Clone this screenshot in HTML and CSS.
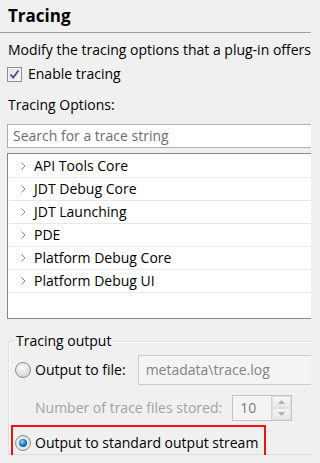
FILE: index.html
```html
<!DOCTYPE html>
<html>
<head>
<meta charset="utf-8">
<link rel="stylesheet" href="styles.css">
</head>
<body>
<div class="page">
  <div class="header"><span class="title">Tracing</span></div>
  <div class="content">
    <div class="desc">Modify the tracing options that a plug-in offers.</div>
    <label class="check-row">
      <span class="checkbox">
        <svg width="11" height="11" viewBox="0 0 11 11"><path d="M1.5 5.5 L4.2 8.6 L9.5 1.5" fill="none" stroke="#3b5197" stroke-width="1.8"/></svg>
      </span>
      <span>Enable tracing</span>
    </label>
    <div class="section-label">Tracing Options:</div>
    <div class="search">Search for a trace string</div>
    <div class="tree">
      <div class="row"><span class="chev"><svg width="5" height="8" viewBox="0 0 5 8"><path d="M0.5 0.5 L4 4 L0.5 7.5" fill="none" stroke="#8a8a8a" stroke-width="1"/></svg></span>API Tools Core</div>
      <div class="row"><span class="chev"><svg width="5" height="8" viewBox="0 0 5 8"><path d="M0.5 0.5 L4 4 L0.5 7.5" fill="none" stroke="#8a8a8a" stroke-width="1"/></svg></span>JDT Debug Core</div>
      <div class="row"><span class="chev"><svg width="5" height="8" viewBox="0 0 5 8"><path d="M0.5 0.5 L4 4 L0.5 7.5" fill="none" stroke="#8a8a8a" stroke-width="1"/></svg></span>JDT Launching</div>
      <div class="row"><span class="chev"><svg width="5" height="8" viewBox="0 0 5 8"><path d="M0.5 0.5 L4 4 L0.5 7.5" fill="none" stroke="#8a8a8a" stroke-width="1"/></svg></span>PDE</div>
      <div class="row"><span class="chev"><svg width="5" height="8" viewBox="0 0 5 8"><path d="M0.5 0.5 L4 4 L0.5 7.5" fill="none" stroke="#8a8a8a" stroke-width="1"/></svg></span>Platform Debug Core</div>
      <div class="row"><span class="chev"><svg width="5" height="8" viewBox="0 0 5 8"><path d="M0.5 0.5 L4 4 L0.5 7.5" fill="none" stroke="#8a8a8a" stroke-width="1"/></svg></span>Platform Debug UI</div>
    </div>
    <fieldset class="group">
      <legend>Tracing output</legend>
      <div class="opt-row file-row">
        <span class="radio"></span>
        <span class="opt-label">Output to file:</span>
        <div class="field">metadata\trace.log</div>
      </div>
      <div class="opt-row count-row">
        <span class="disabled-text">Number of trace files stored:</span>
        <div class="spinner">
          <span class="spin-value">10</span>
          <span class="spin-buttons">
            <span class="spin-btn"><svg width="7" height="4" viewBox="0 0 7 4"><path d="M0 4 L3.5 0 L7 4 Z" fill="#b0b0b0"/></svg></span>
            <span class="spin-btn"><svg width="7" height="4" viewBox="0 0 7 4"><path d="M0 0 L3.5 4 L7 0 Z" fill="#b0b0b0"/></svg></span>
          </span>
        </div>
      </div>
      <div class="opt-row highlight">
        <span class="radio selected"><span class="dot"></span></span>
        <span class="opt-label">Output to standard output stream</span>
      </div>
    </fieldset>
  </div>
</div>
</body>
</html>
```

FILE: styles.css
```css
html, body {
  margin: 0;
  padding: 0;
  background: #f0f0f0;
  overflow: hidden;
}

body {
  font-family: "Open Sans", "Noto Sans", sans-serif;
  font-size: 14px;
  line-height: 20px;
  color: #000;
}

.page {
  width: 311px;
  overflow: hidden;
}

.header {
  height: 32px;
  border-bottom: 1px solid #a0a0a0;
  padding-left: 8px;
  display: flex;
  align-items: center;
}

.title {
  font-weight: 700;
  font-size: 17px;
  line-height: 22px;
  margin-top: -1px;
}

.content {
  padding-left: 7px;
}

.desc {
  margin-top: 7px;
  padding-left: 1px;
  white-space: nowrap;
  overflow: hidden;
}

.check-row {
  display: flex;
  align-items: center;
  margin-top: 4px;
  height: 20px;
}

.checkbox {
  width: 13px;
  height: 13px;
  border: 1px solid #8e8f8f;
  background: linear-gradient(135deg, #dcdcdc, #fbfbfb);
  box-shadow: inset 0 0 0 1px #f4f4f4;
  display: flex;
  align-items: center;
  justify-content: center;
  margin-right: 6px;
}

.section-label {
  margin-top: 11px;
  padding-left: 1px;
}

.search {
  margin-top: 9px;
  height: 22px;
  border: 1px solid #abadb3;
  border-right: none;
  background: #fff;
  color: #6d6d6d;
  padding-left: 5px;
  line-height: 22px;
  white-space: nowrap;
  overflow: hidden;
}

.tree {
  margin-top: 5px;
  height: 163px;
  border: 1px solid #828790;
  border-right: none;
  background: #fff;
  padding: 1px 0 0 1px;
}

.row {
  height: 22px;
  line-height: 22px;
  border-bottom: 1px solid #e8e8e8;
  display: flex;
  align-items: center;
  white-space: nowrap;
}

.chev {
  width: 25px;
  padding-left: 12px;
  box-sizing: border-box;
  display: flex;
  align-items: center;
}

.group {
  margin: 12px 0 0 1px;
  padding: 0 0 3px 2px;
  border: 1px solid #d5dfe5;
  border-right: none;
  border-radius: 3px 0 0 3px;
  box-shadow: inset 1px 1px 0 #fff;
  height: 119px;
  min-width: 0;
}

.group legend {
  padding: 0 2px;
  margin-left: 3px;
  line-height: 20px;
}

.opt-row {
  display: flex;
  align-items: center;
}

.file-row {
  margin-top: 4px;
  height: 30px;
  padding-left: 4px;
}

.radio {
  width: 14px;
  height: 14px;
  border-radius: 50%;
  border: 1px solid #8c8c8c;
  background: radial-gradient(circle at 40% 35%, #fafafa 0%, #e2e2e2 55%, #c8c8c8 100%);
  display: flex;
  align-items: center;
  justify-content: center;
  margin-right: 4px;
  flex: none;
}

.radio.selected {
  background: radial-gradient(circle, #f6f6f6 0%, #dadada 100%);
}

.dot {
  width: 8px;
  height: 8px;
  border-radius: 50%;
  background: radial-gradient(circle at 40% 35%, #9fe2ff 0%, #1c8ad4 40%, #0b3f73 100%);
}

.opt-label {
  white-space: nowrap;
}

.field {
  margin-left: 12px;
  height: 28px;
  flex: 1;
  min-width: 0;
  border: 1px solid #cdcdcd;
  border-right: none;
  background: #f4f4f4;
  color: #838383;
  line-height: 27px;
  padding-left: 7px;
  white-space: nowrap;
  overflow: hidden;
}

.count-row {
  margin-top: 10px;
  height: 26px;
  padding-left: 24px;
}

.disabled-text {
  color: #a3a3a3;
  white-space: nowrap;
}

.spinner {
  margin-left: 10px;
  width: 58px;
  height: 24px;
  border: 1px solid #c4c4c4;
  background: #f4f4f4;
  display: flex;
}

.spin-value {
  flex: 1;
  padding-left: 7px;
  color: #7a7a7a;
  line-height: 24px;
}

.spin-buttons {
  width: 19px;
  display: flex;
  flex-direction: column;
  border-left: 1px solid #d6d6d6;
}

.spin-btn {
  flex: 1;
  display: flex;
  align-items: center;
  justify-content: center;
  background: linear-gradient(#f6f6f6, #e8e8e8);
  border: 1px solid #e0e0e0;
}

.highlight {
  margin-top: 4px;
  width: 249px;
  height: 31px;
  border: 2px solid #ee1111;
  padding-left: 2px;
}
```
